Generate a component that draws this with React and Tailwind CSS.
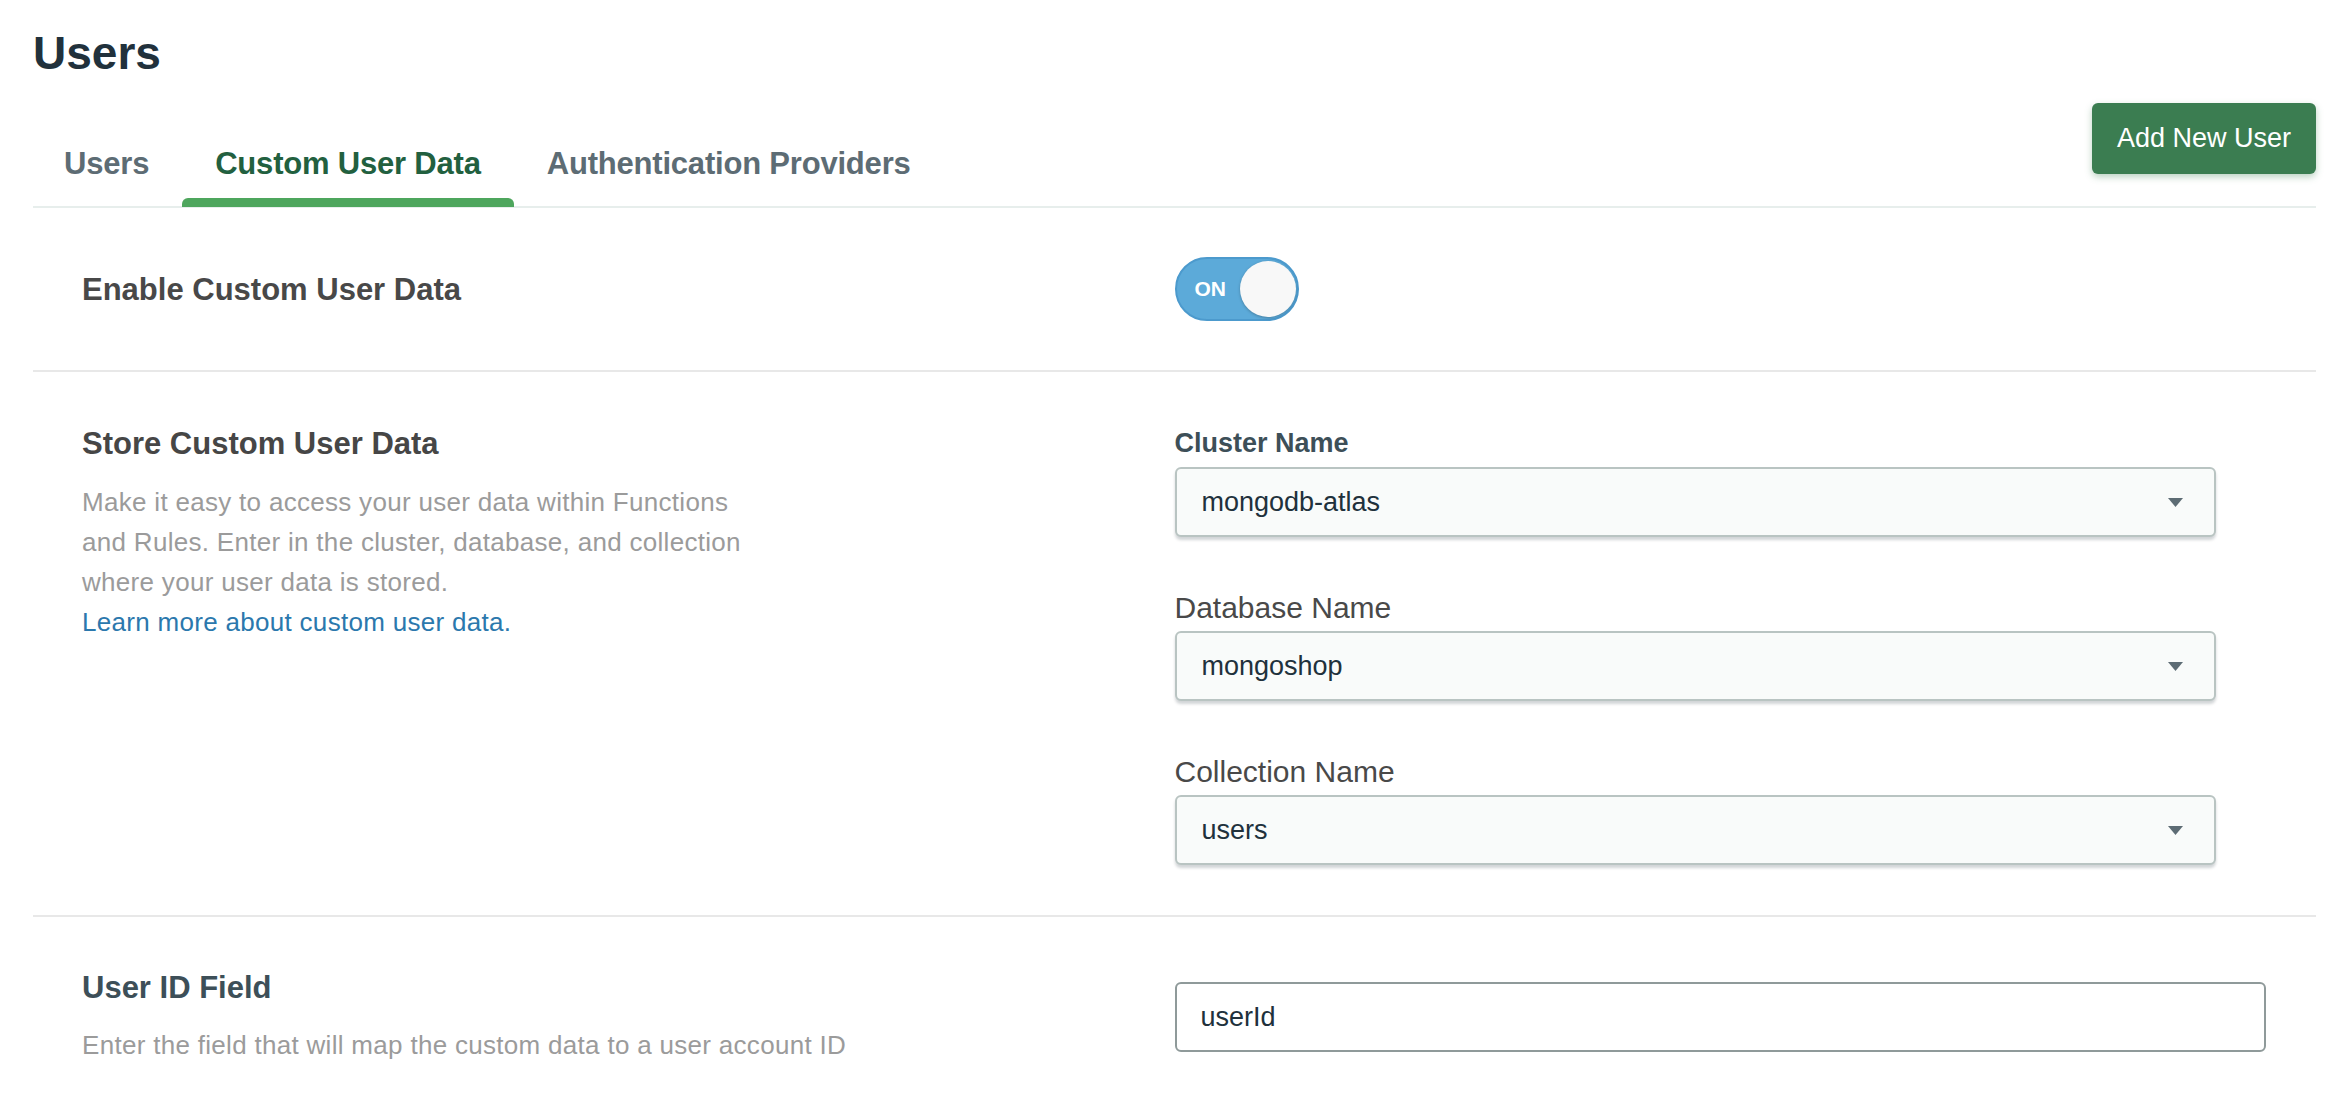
import React, { useState } from 'react';

const tabs = ['Users', 'Custom User Data', 'Authentication Providers'];

const Caret = () => (
  <svg width="15" height="9" viewBox="0 0 15 9">
    <path d="M0 0H15L7.5 9Z" fill="#5d6c74" />
  </svg>
);

const SelectBox = ({ value }) => (
  <div className="flex h-[70px] w-[1041px] items-center justify-between rounded-[6px] border-2 border-[#b9c4c2] bg-[#f9fbfa] pl-[25px] pr-[31px] shadow-[0_3px_3px_rgba(6,22,33,0.18)]">
    <span className="text-[27px] leading-[27px] text-[#21313c]">{value}</span>
    <Caret />
  </div>
);

const App = () => {
  const [active, setActive] = useState('Custom User Data');
  const [enabled, setEnabled] = useState(true);

  return (
    <div className="min-h-screen bg-white pl-[33px] pr-[32px] pt-[30px] font-['Liberation_Sans',Arial,sans-serif]">
      <h1 className="text-[46px] font-bold leading-[46px] text-[#21313c]">Users</h1>

      {/* tabs + action */}
      <div className="mt-[27px] flex items-start justify-between border-b-2 border-[#e7eeec]">
        <nav className="-ml-[2px] flex">
          {tabs.map((t) => (
            <button key={t} onClick={() => setActive(t)} className="flex flex-col pt-[45px]">
              <span
                className={`px-[33px] text-[31px] font-bold leading-[31px] tracking-[-0.2px] ${
                  active === t ? 'text-[#22603f]' : 'text-[#5d6c74]'
                }`}
              >
                {t}
              </span>
              <span
                className={`mt-[19px] -mb-[1px] h-[9px] w-full rounded-t-[6px] ${
                  active === t ? 'bg-[#4ea65d]' : 'bg-transparent'
                }`}
              />
            </button>
          ))}
        </nav>
        <button className="h-[71px] w-[224px] rounded-[6px] bg-[#3b7d51] text-[27px] text-white shadow-[0_3px_7px_rgba(59,125,81,0.35)]">
          Add New User
        </button>
      </div>

      {/* enable */}
      <div className="grid h-[164px] grid-cols-2 items-center border-b-2 border-[#e8e8e8]">
        <div className="pl-[49px] text-[31px] font-bold leading-[31px] text-[#484848]">Enable Custom User Data</div>
        <div>
          <button
            onClick={() => setEnabled(!enabled)}
            className="flex h-[64px] w-[124px] items-center rounded-full border-2 border-[#4c9acd] bg-[#5caad9]"
          >
            <span className="pl-[18px] text-[21px] font-bold text-white">{enabled ? 'ON' : 'OFF'}</span>
            <span className="ml-auto mr-[1px] h-[56px] w-[56px] rounded-full bg-[#f8f8f8] shadow-[0_1px_3px_rgba(0,0,0,0.25)]" />
          </button>
        </div>
      </div>

      {/* store */}
      <div className="grid grid-cols-2 border-b-2 border-[#e8e8e8]">
        <div className="pl-[49px] pt-[56px]">
          <h2 className="text-[31px] font-bold leading-[31px] text-[#464646]">Store Custom User Data</h2>
          <p className="mt-[23px] text-[26px] leading-[40px] tracking-[0.3px] text-[#9b9b9b]">
            Make it easy to access your user data within Functions
            <br />
            and Rules. Enter in the cluster, database, and collection
            <br />
            where your user data is stored.
            <br />
            <a href="#" className="text-[#2b78ad]">Learn more about custom user data.</a>
          </p>
        </div>
        <div className="pb-[50px] pt-[58px]">
          <div className="mb-[10px] text-[27px] font-bold leading-[27px] text-[#3d4f58]">Cluster Name</div>
          <SelectBox value="mongodb-atlas" />
          <div className="mb-[8px] mt-[56px] text-[30px] leading-[30px] text-[#494949]">Database Name</div>
          <SelectBox value="mongoshop" />
          <div className="mb-[8px] mt-[56px] text-[30px] leading-[30px] text-[#494949]">Collection Name</div>
          <SelectBox value="users" />
        </div>
      </div>

      {/* user id */}
      <div className="grid grid-cols-2 pb-[60px]">
        <div className="pl-[49px] pt-[55px]">
          <h2 className="text-[31px] font-bold leading-[31px] text-[#3d4f58]">User ID Field</h2>
          <p className="mt-[22px] text-[26px] leading-[40px] tracking-[0.3px] text-[#9b9b9b]">
            Enter the field that will map the custom data to a user account ID
          </p>
        </div>
        <div className="pr-[50px] pt-[65px]">
          <input
            readOnly
            value="userId"
            className="h-[70px] w-full rounded-[6px] border-2 border-[#8f9a9a] bg-white pl-[24px] text-[27px] text-[#21313c] outline-none"
          />
        </div>
      </div>
    </div>
  );
};

export default App;
